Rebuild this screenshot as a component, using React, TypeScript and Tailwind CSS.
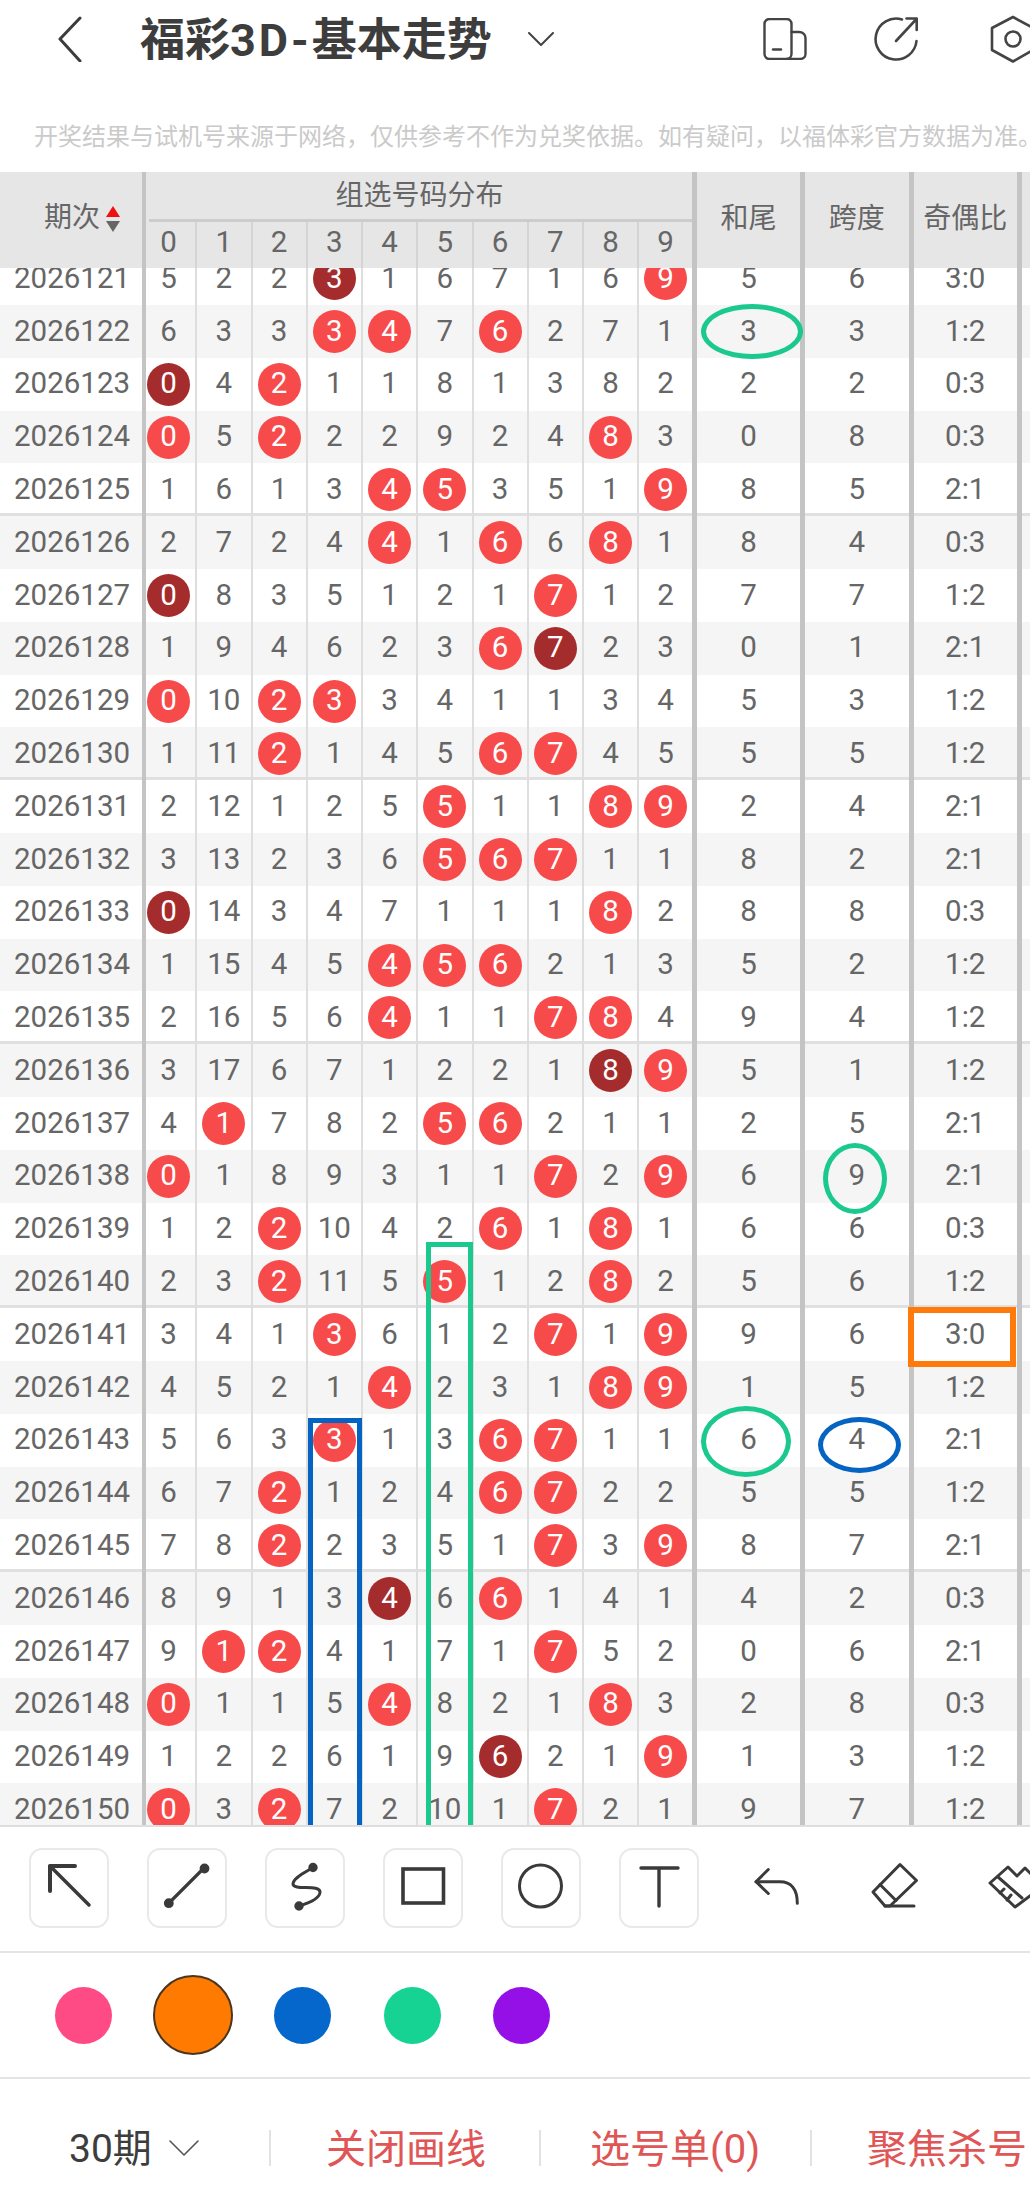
const FONT = "font-['Roboto','Noto_Sans_CJK_SC',sans-serif]";

// period, ten digit cells (r = red ball, d = dark ball), sum tail, span, odd:even
const ROWS: string[] = [
  '2026121 5 2 2 d3 1 6 7 1 6 r9 5 6 3:0',
  '2026122 6 3 3 r3 r4 7 r6 2 7 1 3 3 1:2',
  '2026123 d0 4 r2 1 1 8 1 3 8 2 2 2 0:3',
  '2026124 r0 5 r2 2 2 9 2 4 r8 3 0 8 0:3',
  '2026125 1 6 1 3 r4 r5 3 5 1 r9 8 5 2:1',
  '2026126 2 7 2 4 r4 1 r6 6 r8 1 8 4 0:3',
  '2026127 d0 8 3 5 1 2 1 r7 1 2 7 7 1:2',
  '2026128 1 9 4 6 2 3 r6 d7 2 3 0 1 2:1',
  '2026129 r0 10 r2 r3 3 4 1 1 3 4 5 3 1:2',
  '2026130 1 11 r2 1 4 5 r6 r7 4 5 5 5 1:2',
  '2026131 2 12 1 2 5 r5 1 1 r8 r9 2 4 2:1',
  '2026132 3 13 2 3 6 r5 r6 r7 1 1 8 2 2:1',
  '2026133 d0 14 3 4 7 1 1 1 r8 2 8 8 0:3',
  '2026134 1 15 4 5 r4 r5 r6 2 1 3 5 2 1:2',
  '2026135 2 16 5 6 r4 1 1 r7 r8 4 9 4 1:2',
  '2026136 3 17 6 7 1 2 2 1 d8 r9 5 1 1:2',
  '2026137 4 r1 7 8 2 r5 r6 2 1 1 2 5 2:1',
  '2026138 r0 1 8 9 3 1 1 r7 2 r9 6 9 2:1',
  '2026139 1 2 r2 10 4 2 r6 1 r8 1 6 6 0:3',
  '2026140 2 3 r2 11 5 r5 1 2 r8 2 5 6 1:2',
  '2026141 3 4 1 r3 6 1 2 r7 1 r9 9 6 3:0',
  '2026142 4 5 2 1 r4 2 3 1 r8 r9 1 5 1:2',
  '2026143 5 6 3 r3 1 3 r6 r7 1 1 6 4 2:1',
  '2026144 6 7 r2 1 2 4 r6 r7 2 2 5 5 1:2',
  '2026145 7 8 r2 2 3 5 1 r7 3 r9 8 7 2:1',
  '2026146 8 9 1 3 d4 6 r6 1 4 1 4 2 0:3',
  '2026147 9 r1 r2 4 1 7 1 r7 5 2 0 6 2:1',
  '2026148 r0 1 1 5 r4 8 2 1 r8 3 2 8 0:3',
  '2026149 1 2 2 6 1 9 d6 2 1 r9 1 3 1:2',
  '2026150 r0 3 r2 7 2 10 1 r7 2 1 9 7 1:2',
];

const DIGIT_CELL =
  'w-[55.25px] shrink-0 flex items-center justify-center border-r-2 border-[#dedede] first:border-l-4 first:border-l-[#c4c4c4] first:pr-[4px] last:w-[52.75px] last:border-r-0';

function Ball({ value }: { value: string }) {
  const kind = value[0];
  if (kind !== 'r' && kind !== 'd') return <span>{value}</span>;
  return (
    <span
      className={`w-[43px] h-[43px] shrink-0 rounded-full flex items-center justify-center text-white ${
        kind === 'r' ? 'bg-[#f74a4a]' : 'bg-[#a52c2c]'
      }`}
    >
      {value.slice(1)}
    </span>
  );
}

function Row({ raw, index }: { raw: string; index: number }) {
  const parts = raw.split(' ');
  const digits = parts.slice(1, 11);
  const groupEnd = Number(parts[0]) % 5 === 0;
  return (
    <div
      className={`flex h-[52.8px] text-[29.5px] leading-none text-[#666] ${index % 2 === 1 ? 'bg-[#f5f5f5]' : 'bg-white'} ${
        groupEnd ? 'shadow-[inset_0_-3px_0_#e0e0e0]' : ''
      }`}
    >
      <div className="w-[142px] shrink-0 pl-[14px] flex items-center">{parts[0]}</div>
      <div className="flex">
        {digits.map((d, i) => (
          <div key={i} className={DIGIT_CELL}>
            <Ball value={d} />
          </div>
        ))}
      </div>
      <div className="w-[108px] shrink-0 border-l-[5px] border-[#c4c4c4] flex items-center justify-center">{parts[11]}</div>
      <div className="w-[108.5px] shrink-0 border-l-[5px] border-[#c4c4c4] flex items-center justify-center">{parts[12]}</div>
      <div className="w-[108.5px] shrink-0 border-l-[5px] border-[#c4c4c4] flex items-center justify-center">{parts[13]}</div>
      <div className="flex-1 border-l-[5px] border-[#c4c4c4]" />
    </div>
  );
}

function TableHeader() {
  return (
    <div className="flex h-[96px] shrink-0 bg-[#e6e6e6] text-[#666] text-[28px] leading-none">
      <div className="w-[142px] shrink-0 flex items-center pl-[44px] pb-[4px] gap-[6px]">
        <span>期次</span>
        <span className="flex flex-col gap-[4px] pt-[2px]">
          <span className="w-0 h-0 border-x-[7px] border-x-transparent border-b-[11px] border-b-[#f01010]" />
          <span className="w-0 h-0 border-x-[7px] border-x-transparent border-t-[11px] border-t-[#666]" />
        </span>
      </div>
      <div className="w-[550px] shrink-0 flex flex-col border-l-4 border-[#c4c4c4] -mr-[4px] box-content">
        <div className="h-[47px] ml-[3px] mr-[4px] flex items-center justify-center border-b-[3px] border-[#cccccc] box-content pr-[2px]">
          组选号码分布
        </div>
        <div className="flex-1 flex -ml-[4px] text-[29.5px]">
          {[0, 1, 2, 3, 4, 5, 6, 7, 8, 9].map((n) => (
            <div
              key={n}
              className="w-[55.25px] shrink-0 flex items-center justify-center pb-[5px] border-r-2 border-[#d4d4d4] last:w-[52.75px] last:border-r-0"
            >
              {n}
            </div>
          ))}
        </div>
      </div>
      <div className="w-[108px] shrink-0 border-l-[5px] border-[#c4c4c4] flex items-center justify-center pb-[2px]">和尾</div>
      <div className="w-[108.5px] shrink-0 border-l-[5px] border-[#c4c4c4] flex items-center justify-center pb-[2px]">跨度</div>
      <div className="w-[108.5px] shrink-0 border-l-[5px] border-[#c4c4c4] flex items-center justify-center pb-[2px]">奇偶比</div>
      <div className="flex-1 border-l-[5px] border-[#c4c4c4]" />
    </div>
  );
}

function ToolIcon({ children, boxed = true }: { children: React.ReactNode; boxed?: boolean }) {
  return (
    <div
      className={`w-[80px] h-[80px] shrink-0 rounded-[13px] border-2 ${boxed ? 'border-[#e9e9e9]' : 'border-transparent'}`}
    >
      <svg
        viewBox="2 2 76 76"
        className="w-[76px] h-[76px] overflow-visible"
        fill="none"
        stroke="#3a3a3a"
        strokeWidth="3"
        strokeLinecap="round"
        strokeLinejoin="round"
      >
        {children}
      </svg>
    </div>
  );
}

function Toolbar() {
  return (
    <div className="h-[126px] shrink-0 border-b-2 border-[#e4e4e4] pt-[21px] pl-[29px] flex gap-[38px] overflow-hidden">
      <ToolIcon>
        <path d="M21 43V18H46" strokeWidth="4" />
        <path d="M21 18L60 57" strokeWidth="3.5" />
      </ToolIcon>
      <ToolIcon>
        <path d="M22 55L57 20" strokeWidth="3.2" />
        <circle cx="57.5" cy="20.5" r="3.4" fill="#3a3a3a" />
        <circle cx="21.8" cy="55.2" r="3.4" fill="#3a3a3a" />
      </ToolIcon>
      <ToolIcon>
        <path d="M48 19.5C39 25 28 30 28 36C28 43 55 36 55 44C55 50 44 55 34 58" strokeWidth="3" />
        <circle cx="48" cy="19.5" r="3.2" fill="#3a3a3a" />
        <circle cx="34" cy="58" r="3.2" fill="#3a3a3a" />
      </ToolIcon>
      <ToolIcon>
        <rect x="20" y="21" width="40.5" height="34" strokeWidth="3.6" strokeLinejoin="miter" />
      </ToolIcon>
      <ToolIcon>
        <circle cx="39.5" cy="38" r="21" strokeWidth="3" />
      </ToolIcon>
      <ToolIcon>
        <path d="M22 20H59M40 20V58" strokeWidth="3.4" />
      </ToolIcon>
      <ToolIcon boxed={false}>
        <path d="M31.3 21.5L19 33.7L31.3 45.5" />
        <path d="M19 33.7H43C54 33.7 60.3 41 60.3 55.3" />
      </ToolIcon>
      <ToolIcon boxed={false}>
        <path d="M45 16.5L61.5 32.5L35 58L30 58L18 44Z" />
        <path d="M25 36.5L41 52.5M30 58H59" />
      </ToolIcon>
      <ToolIcon boxed={false}>
        <path d="M17 35L35 19L44 28L52 20L70 38L42 59Z" />
        <path d="M25 29L49 50M27 45L31 41M34 52L38 47" />
      </ToolIcon>
    </div>
  );
}

export default function App() {
  return (
    <div className={`w-[1030px] h-[2200px] bg-white flex flex-col overflow-hidden ${FONT}`}>
      {/* title bar */}
      <div className="h-[78px] shrink-0 flex items-center text-[#444] overflow-hidden">
        <svg viewBox="0 0 24 46" className="w-[24px] h-[46px] ml-[58px] shrink-0" fill="none" stroke="#3c3c3c" strokeWidth="3" strokeLinecap="round" strokeLinejoin="round">
          <path d="M22 2L2 23L22 45" />
        </svg>
        <div className="ml-[58px] w-[346px] shrink-0 pt-[3px] text-[45px] leading-none font-bold text-[#3d3d3d] whitespace-nowrap">
          福彩<span className="tracking-[3px]">3D-</span>基本走势
        </div>
        <svg viewBox="0 0 26 14" className="w-[26px] h-[14px] ml-[42px] shrink-0" fill="none" stroke="#444" strokeWidth="2" strokeLinecap="round" strokeLinejoin="round">
          <path d="M1 1L13 13L25 1" />
        </svg>
        <svg viewBox="0 0 44 42" className="w-[44px] h-[42px] ml-[209px] shrink-0" fill="none" stroke="#444" strokeWidth="2.4" strokeLinecap="round" strokeLinejoin="round">
          <rect x="1.5" y="1" width="27" height="40" rx="5" />
          <path d="M28.5 14H36C39.5 14 42.5 16.5 42.5 20V36C42.5 39 40 41 37 41H24" />
          <path d="M10 31.5H18" />
        </svg>
        <svg viewBox="0 0 50 50" className="w-[50px] h-[50px] ml-[64px] shrink-0" fill="none" stroke="#444" strokeWidth="2.6" strokeLinecap="round" strokeLinejoin="round">
          <path d="M31 5.4A20.5 20.5 0 1 0 45.5 27" />
          <path d="M25 27L45 5.5M35.5 4.5H45.7V16" />
        </svg>
        <svg viewBox="0 0 48 50" className="w-[48px] h-[50px] ml-[68px] shrink-0" fill="none" stroke="#444" strokeWidth="2.6" strokeLinecap="round" strokeLinejoin="round">
          <path d="M24 3L44 14V36L24 47.5L3 36V14Z" />
          <circle cx="24" cy="25" r="7.5" />
        </svg>
      </div>

      {/* notice */}
      <div className="h-[94px] shrink-0 pt-[43px] pl-[34px] text-[24px] leading-[32px] text-[#cacaca] whitespace-nowrap overflow-hidden">
        开奖结果与试机号来源于网络，仅供参考不作为兑奖依据。如有疑问，以福体彩官方数据为准。
      </div>

      <TableHeader />

      {/* scrolled rows + hand drawn marks */}
      <div className="relative h-[1557px] shrink-0 overflow-hidden">
        <div className="-mt-[15.75px]">
          {ROWS.map((raw, i) => (
            <Row key={raw} raw={raw} index={i} />
          ))}
        </div>
        <div className="absolute left-[701px] top-[36px] w-[102px] h-[55px] rounded-[50%] border-[5px] border-[#1bc98e]" />
        <div className="absolute left-[823px] top-[875px] w-[64px] h-[71px] rounded-[50%] border-[5px] border-[#1bc98e]" />
        <div className="absolute left-[426px] top-[974px] w-[47px] h-[620px] border-[5px] border-[#1bc98e]" />
        <div className="absolute left-[908px] top-[1039px] w-[108px] h-[60px] border-[6px] border-[#ff7a0a]" />
        <div className="absolute left-[308px] top-[1150px] w-[54px] h-[440px] border-[5px] border-[#0563c1]" />
        <div className="absolute left-[701px] top-[1138px] w-[90px] h-[71px] rounded-[50%] border-[5px] border-[#1bc98e]" />
        <div className="absolute left-[818px] top-[1149px] w-[83px] h-[56px] rounded-[50%] border-[5px] border-[#0563c1]" />
      </div>
      <div className="h-[2px] shrink-0 bg-[#dedede]" />

      <Toolbar />

      {/* pen colours */}
      <div className="h-[126px] shrink-0 border-b-2 border-[#e4e4e4] pl-[29px] flex items-center">
        <div className="w-[109.5px] flex justify-center"><div className="w-[57px] h-[57px] rounded-full bg-[#ff4b85]" /></div>
        <div className="w-[109.5px] flex justify-center"><div className="w-[80px] h-[80px] rounded-full bg-[#ff7a00] border-2 border-[#4a3520]" /></div>
        <div className="w-[109.5px] flex justify-center"><div className="w-[57px] h-[57px] rounded-full bg-[#0566cc]" /></div>
        <div className="w-[109.5px] flex justify-center"><div className="w-[57px] h-[57px] rounded-full bg-[#16d393]" /></div>
        <div className="w-[109.5px] flex justify-center"><div className="w-[57px] h-[57px] rounded-full bg-[#9510e6]" /></div>
      </div>

      {/* bottom actions */}
      <div className="flex-1 flex items-center pt-[17px] text-[40px] leading-none text-[#e05555] whitespace-nowrap overflow-hidden">
        <div className="w-[271px] h-[36px] shrink-0 flex items-center pl-[69px] border-r-2 border-[#e2e2e2]">
          <span className="w-[82px] pt-[3px] text-[39px] text-[#3d3d3d]">30期</span>
          <svg viewBox="0 0 30 16" className="w-[30px] h-[16px] ml-[18px] shrink-0" fill="none" stroke="#555" strokeWidth="1.6" strokeLinecap="round" strokeLinejoin="round">
            <path d="M1 1L15 15L29 1" />
          </svg>
        </div>
        <div className="w-[270px] h-[36px] shrink-0 flex items-center pl-[55px] pt-[3px] border-r-2 border-[#e2e2e2]">关闭画线</div>
        <div className="w-[271px] h-[36px] shrink-0 flex items-center pl-[49px] pt-[3px] border-r-2 border-[#e2e2e2]">选号单(0)</div>
        <div className="h-[36px] shrink-0 flex items-center pl-[55px] pt-[3px]">聚焦杀号</div>
      </div>
    </div>
  );
}
